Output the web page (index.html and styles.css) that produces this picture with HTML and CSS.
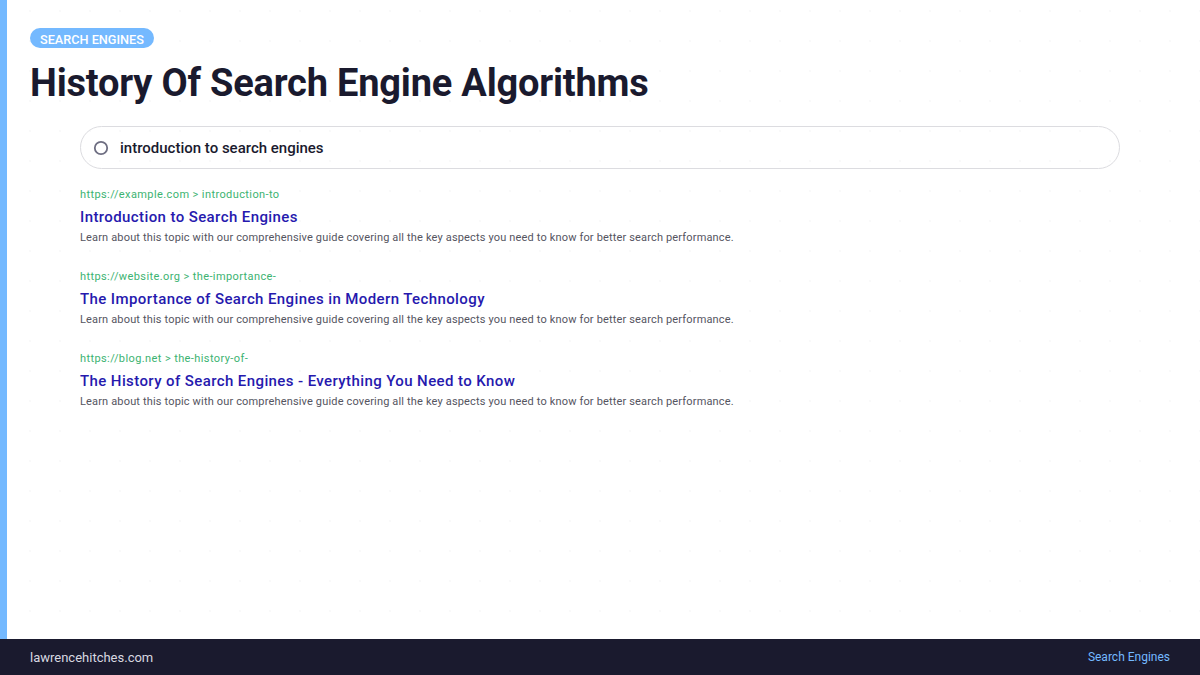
FILE: index.html
```html
<!DOCTYPE html>
<html lang="en">
<head>
<meta charset="utf-8">
<title>History Of Search Engine Algorithms</title>
<link rel="stylesheet" href="styles.css">
</head>
<body>
<div class="slide">
  <main class="content">
    <span class="badge">Search Engines</span>
    <h1 class="title">History Of Search Engine Algorithms</h1>
    <section class="serp">
      <div class="searchbar">
        <svg class="search-icon" width="16" height="16" viewBox="0 0 16 16" aria-hidden="true">
          <circle cx="8" cy="8" r="6.2" fill="none" stroke="#6e6e82" stroke-width="1.8"/>
        </svg>
        <span class="query">introduction to search engines</span>
      </div>
      <ul class="results">
        <li class="result">
          <div class="url">https://example.com &gt; introduction-to</div>
          <a class="link" href="#">Introduction to Search Engines</a>
          <p class="snippet">Learn about this topic with our comprehensive guide covering all the key aspects you need to know for better search performance.</p>
        </li>
        <li class="result">
          <div class="url">https://website.org &gt; the-importance-</div>
          <a class="link" href="#">The Importance of Search Engines in Modern Technology</a>
          <p class="snippet">Learn about this topic with our comprehensive guide covering all the key aspects you need to know for better search performance.</p>
        </li>
        <li class="result">
          <div class="url">https://blog.net &gt; the-history-of-</div>
          <a class="link" href="#">The History of Search Engines - Everything You Need to Know</a>
          <p class="snippet">Learn about this topic with our comprehensive guide covering all the key aspects you need to know for better search performance.</p>
        </li>
      </ul>
    </section>
  </main>
  <footer class="footer">
    <span class="site">lawrencehitches.com</span>
    <span class="topic">Search Engines</span>
  </footer>
</div>
</body>
</html>
```
FILE: styles.css
```css
* { box-sizing: border-box; }

html, body {
  margin: 0;
  padding: 0;
}

body {
  font-family: "Roboto", "Liberation Sans", sans-serif;
  color: #1a1a2e;
  background: #fff;
}

.slide {
  width: 1200px;
  height: 675px;
  display: flex;
  flex-direction: column;
  background-color: #fff;
  background-image: radial-gradient(circle, rgba(26, 26, 46, 0.025) 1px, transparent 1.6px);
  background-size: 30px 30px;
  background-position: -15px -4px;
}

.content {
  flex: 1;
  border-left: 7px solid #74b9ff;
  padding: 28px 0 0 23px;
  display: flex;
  flex-direction: column;
  align-items: flex-start;
}

.badge {
  display: inline-block;
  height: 20px;
  line-height: 24px;
  overflow: hidden;
  padding: 0 10px;
  border-radius: 10px;
  background: #74b9ff;
  color: #fff;
  font-size: 12.7px;
  font-weight: 500;
  text-transform: uppercase;
}

.title {
  margin: 12px 0 0;
  font-size: 38px;
  line-height: 46px;
  font-weight: 700;
  color: #1a1a2e;
  letter-spacing: -0.2px;
}

.serp {
  align-self: stretch;
  margin: 20px 80px 0 50px;
}

.searchbar {
  height: 43px;
  border: 1px solid #dcdce0;
  border-radius: 22px;
  display: flex;
  align-items: center;
  padding-left: 12px;
  gap: 11px;
}

.search-icon { display: block; }

.query {
  font-size: 15px;
  font-weight: 500;
  color: #1a1a2e;
}

.results {
  list-style: none;
  margin: 18px 0 0;
  padding: 0;
  display: flex;
  flex-direction: column;
  gap: 24px;
}

.result {
  display: flex;
  flex-direction: column;
}

.url {
  font-size: 11px;
  line-height: 16px;
  color: #3cb371;
  letter-spacing: 0.4px;
}

.link {
  margin-top: 4px;
  font-size: 15px;
  line-height: 20px;
  font-weight: 500;
  color: #2619ae;
  text-decoration: none;
  letter-spacing: 0.4px;
}

.snippet {
  margin: 3px 0 0;
  font-size: 11px;
  line-height: 15px;
  color: #55555f;
  letter-spacing: 0.16px;
}

.footer {
  height: 36px;
  background: #1a1a2e;
  display: flex;
  align-items: center;
  justify-content: space-between;
  padding: 0 30px;
}

.site {
  font-size: 13px;
  color: #d8d8e0;
}

.topic {
  font-size: 12px;
  color: #74b9ff;
}
```
